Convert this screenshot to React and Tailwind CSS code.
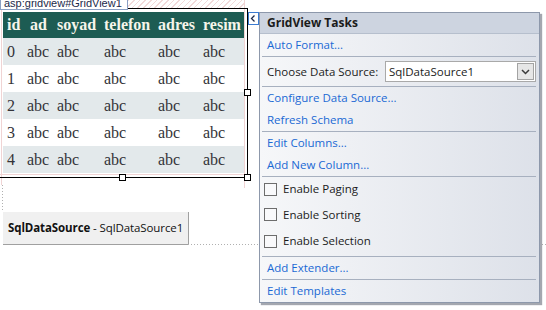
export default function App() {
  const cols = [20, 30, 47, 54, 45, 45];
  const headers = ["id", "ad", "soyad", "telefon", "adres", "resim"];
  const link = "text-[#1a69d4]";
  const Sep = () => <div className="h-px bg-[#a7b0bf] ml-[2px] mr-[3px]" />;
  const Check = ({ label, h }) => (
    <div className={`${h} flex items-center pl-[4px]`}>
      <div className="w-[13px] h-[13px] border border-[#6d6d6d] bg-white/40" />
      <span className="ml-[6px] text-[#1b1b1b]">{label}</span>
    </div>
  );
  return (
    <div className="relative w-[546px] h-[310px] bg-white overflow-hidden font-['Open_Sans',sans-serif] text-[11.5px] leading-none">
      {/* design guides */}
      <div className="absolute left-[1px] top-0 w-px h-[185px] bg-[#f0d4d4]" />
      <div className="absolute left-[244px] top-0 w-px h-[188px] bg-[#f0d4d4]" />
      <div className="absolute left-0 top-[174px] w-[250px] h-px bg-[#f0d4d4]" />
      <div className="absolute left-[2px] top-[185px] w-px h-[27px] bg-[repeating-linear-gradient(180deg,#b0b0b0_0px,#b0b0b0_1px,transparent_1px,transparent_3px)]" />
      <div className="absolute left-[188px] top-[244px] w-[358px] h-px bg-[repeating-linear-gradient(90deg,#b0b0b0_0px,#b0b0b0_1px,transparent_1px,transparent_3px)]" />
      <div className="absolute left-[128px] top-0 w-[116px] h-[8px] bg-[repeating-linear-gradient(135deg,#f1d9d9_0px,#f1d9d9_1px,transparent_1px,transparent_4px)]" />

      <div className="pt-[8px]">
        <div className="relative w-[248px] h-[170px] border border-l-0 border-black pl-[3px] pt-[3px]">
          <div className="w-[241px] font-['Liberation_Serif',serif] text-[16px] leading-none">
            <div className="flex h-[26px] bg-[#1d5c53] text-[#f6f5ea] font-bold">
              {headers.map((h, i) => (
                <div
                  key={h}
                  style={{ width: cols[i] }}
                  className={`flex items-center ${i === 1 ? "pl-[7px]" : "pl-[4px]"}`}
                >
                  {h}
                </div>
              ))}
            </div>
            {[0, 1, 2, 3, 4].map((r) => (
              <div
                key={r}
                className={`flex h-[27px] text-[#333338] ${r % 2 === 0 ? "bg-[#e3e9eb]" : "bg-white"}`}
              >
                {cols.map((w, i) => (
                  <div key={i} style={{ width: w }} className="flex items-center pl-[4px]">
                    {i === 0 ? r : "abc"}
                  </div>
                ))}
              </div>
            ))}
          </div>
        </div>

        <div className="ml-[3px] mt-[34px] w-[186px] h-[33px] bg-[#f0f0f0] border-r border-b border-[#a0a0a0] flex items-center pl-[5px] text-[11.5px] tracking-[-0.1px] text-[#111] whitespace-nowrap">
          <span className="font-bold">SqlDataSource</span>
          <span>&nbsp;- SqlDataSource1</span>
        </div>
      </div>

      {/* tag label */}
      <div className="absolute left-0 top-0 w-[128px] h-[10px] bg-white border border-t-0 border-[#8ba0c4] overflow-hidden">
        <div className="-mt-[3px] pl-[3px] text-[11px] leading-[12px] text-[#1d2a4a] font-['Liberation_Sans',sans-serif] whitespace-nowrap">
          asp:gridview#GridView1
        </div>
      </div>

      {/* handles */}
      <div className="absolute left-[244px] top-[89px] w-[7px] h-[7px] bg-white border border-black" />
      <div className="absolute left-[244px] top-[174px] w-[7px] h-[7px] bg-white border border-black" />
      <div className="absolute left-[119px] top-[174px] w-[7px] h-[7px] bg-white border border-black" />

      {/* smart tag button */}
      <div className="absolute left-[248px] top-[12px] w-[11px] h-[13px] bg-white border border-[#3c7bd0] flex items-center justify-center">
        <svg width="7" height="9" viewBox="0 0 7 9">
          <polyline points="4.5,1.5 1.5,4.5 4.5,7.5" fill="none" stroke="#1e2a4a" strokeWidth="1.3" />
        </svg>
      </div>

      {/* tasks panel */}
      <div className="absolute left-[259px] top-[12px] w-[281px] h-[291px] border border-[#8d98ab] shadow-[2px_2px_1px_rgba(90,95,110,0.55)] flex flex-col bg-[linear-gradient(90deg,#f6f7f9,#dde1e9)]">
        <div className="h-[21px] shrink-0 bg-[#cdd4e0] border-b border-[#b6bfcd] flex items-center pl-[7px] font-bold text-[12px] text-[#1b1b1b]">
          GridView Tasks
        </div>
        <div className={`h-[22px] flex items-center pl-[7px] ${link}`}>Auto Format...</div>
        <Sep />
        <div className="h-[29px] flex items-center pl-[7px] text-[#1b1b1b]">
          <span className="w-[118px]">Choose Data Source:</span>
          <div className="w-[151px] h-[21px] bg-white border border-[#a9a9a9] flex items-center pl-[3px] relative">
            <span>SqlDataSource1</span>
            <div className="absolute right-px top-px w-[17px] h-[17px] bg-[#e6e6e6] border border-[#a3a3a3] flex items-center justify-center">
              <svg width="9" height="6" viewBox="0 0 9 6">
                <polyline points="1,1 4.5,4.5 8,1" fill="none" stroke="#3a3a3a" strokeWidth="1.5" />
              </svg>
            </div>
          </div>
        </div>
        <Sep />
        <div className={`h-[22px] flex items-center pl-[7px] ${link}`}>Configure Data Source...</div>
        <div className={`h-[22px] flex items-center pl-[7px] ${link}`}>Refresh Schema</div>
        <Sep />
        <div className={`h-[22px] flex items-center pl-[7px] ${link}`}>Edit Columns...</div>
        <div className={`h-[22px] flex items-center pl-[7px] ${link}`}>Add New Column...</div>
        <Sep />
        <Check label="Enable Paging" h="h-[24px]" />
        <Check label="Enable Sorting" h="h-[27px]" />
        <Check label="Enable Selection" h="h-[26px]" />
        <div className="h-[2px]" />
        <Sep />
        <div className={`h-[22px] flex items-center pl-[7px] ${link}`}>Add Extender...</div>
        <Sep />
        <div className={`h-[21px] flex items-center pl-[7px] ${link}`}>Edit Templates</div>
      </div>
    </div>
  );
}
